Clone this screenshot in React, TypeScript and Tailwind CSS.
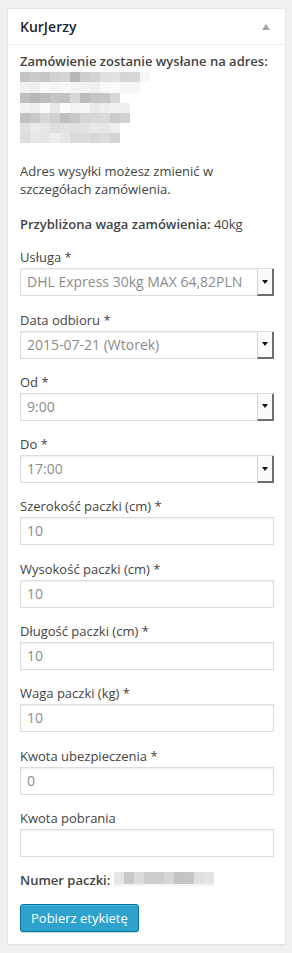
import React from 'react';

const font = { fontFamily: '"Open Sans", "Noto Sans", sans-serif' };

// pixelated (blurred) address, 10px cells
const addressRows: { h: string; cells: string[] }[] = [
  { h: 'h-[10px]', cells: ['#c4c4c4', '#cacaca', '#c6c6c6', '#d2d2d2', '#d4d4d4', '#b8b8b8', '#cfcfcf', '#d6d3d3', '#e0e0e0', '#e2e2e2', '#d6d6d6', '#d8d8d8', '#f6f6f6'] },
  { h: 'h-[11px]', cells: ['#f0f0f0', '#eeeeee', '#fafafa', '#f5f5f5', '#f8f8f8', '#f4f4f4', '#f2f2f2', '#f0f0f0', '#f8f8f8', '#fafafa', '#f6f6f6', '#f6f6f6'] },
  { h: 'h-[10px]', cells: ['#bfbfbf', '#b7b7b7', '#bdbdbd', '#c4c4c4', '#c2c2c2', '#d7d7d7', '#bcbcbc', '#c4c4c4', '#c6c6c6', '#d8d8d8'] },
  { h: 'h-[10px]', cells: ['#f2f2f2', '#efefef', '#fbfbfb', '#e8e8e8', '#fcfcfc', '#f2f2f2', '#f6f6f6', '#e9e9e9', '#eeeeee', '#f1f1f1', '#efefef'] },
  { h: 'h-[10px]', cells: ['#c2c2c2', '#c8c8c8', '#d8d8d8', '#d0d0d0', '#bfbfbf', '#c6c6c6', '#d6d6d6', '#d8d8d8', '#dadada', '#cbcbcb', '#d2d2d2'] },
  { h: 'h-[10px]', cells: ['#e0e0e0', '#ebebeb', '#e6e6e6', '#dedede', '#e2e2e2', '#e1e1e1', '#e3e3e3', '#e8e8e8', '#e6e6e6', '#eeeeee'] },
  { h: 'h-[10px]', cells: ['#dddddd', '#e8e8e8', '#e6e6e6', '#eeeeee', '#e6e6e6', '#dadada', '#dcdcdc', '#d8d8d8', '#dcdcdc', '#d4d4d4'] },
];

const parcelCells = ['#e6e6e6', '#cacaca', '#dcdcdc', '#cdcdcd', '#cdcdcd', '#d6d6d6', '#c4c4c4', '#c6c6c6', '#e0e0e0', '#e4e4e4'];

function Mosaic({ rows }: { rows: { h: string; cells: string[] }[] }) {
  return (
    <div className="flex flex-col">
      {rows.map((r, i) => (
        <div key={i} className={`flex ${r.h}`}>
          {r.cells.map((c, j) => (
            <div key={j} className="w-[10px] h-full" style={{ backgroundColor: c }} />
          ))}
        </div>
      ))}
    </div>
  );
}

function Label({ text }: { text: string }) {
  return <div className="h-5 leading-5 mb-px text-[13px] text-[#444]">{text}</div>;
}

function SelectField({ label, value }: { label: string; value: string }) {
  return (
    <div className="mt-[13.3px]">
      <Label text={label} />
      <div className="h-[28px] flex border border-[#ddd] bg-white shadow-[inset_0_1px_2px_rgba(0,0,0,0.07)]">
        <span className="flex-1 pl-[6px] leading-[26px] text-[14px] text-[#8c8c8c] whitespace-nowrap overflow-hidden">
          {value}
        </span>
        <span className="w-[17px] -mr-px -mb-px flex items-center justify-center bg-[#fbfbfb] border-l border-[#d4d4d4] border-r-2 border-b-2 border-r-[#6e6e6e] border-b-[#6e6e6e]">
          <svg width="6" height="4" viewBox="0 0 6 4">
            <path d="M0 0h6L3 4z" fill="#111" />
          </svg>
        </span>
      </div>
    </div>
  );
}

function InputField({ label, value }: { label: string; value: string }) {
  return (
    <div className="mt-[13.3px]">
      <Label text={label} />
      <div className="h-[28px] border border-[#ddd] bg-white shadow-[inset_0_1px_2px_rgba(0,0,0,0.07)] pl-[6px] leading-[26px] text-[14px] text-[#8c8c8c]">
        {value}
      </div>
    </div>
  );
}

export default function App() {
  return (
    <div className="min-h-screen bg-[#f1f1f1] pt-2 pb-2" style={font}>
      <div className="ml-[7px] w-[279px] bg-white border border-[#e5e5e5] shadow-[0_1px_1px_rgba(0,0,0,0.04)]">
        <div className="h-[36px] border-b border-[#eee] flex items-center justify-between pl-3 pr-[15px]">
          <span className="text-[14px] font-semibold text-[#23282d]">KurJerzy</span>
          <svg width="8" height="6" viewBox="0 0 8 6">
            <path d="M4 0l4 6H0z" fill="#a0a5aa" />
          </svg>
        </div>

        <div className="pl-3 pr-[11px] pt-[6px] pb-3 text-[13px] text-[#444]">
          <div className="h-5 leading-5 font-semibold">Zamówienie zostanie wysłane na adres:</div>
          <div className="mt-px">
            <Mosaic rows={addressRows} />
          </div>

          <p className="mt-[19px] leading-[18px]">
            Adres wysyłki możesz zmienić w
            <br />
            szczegółach zamówienia.
          </p>

          <div className="mt-4 h-5 leading-5">
            <span className="font-semibold">Przybliżona waga zamówienia:</span> 40kg
          </div>

          <SelectField label="Usługa *" value="DHL Express 30kg MAX 64,82PLN" />
          <SelectField label="Data odbioru *" value="2015-07-21 (Wtorek)" />
          <SelectField label="Od *" value="9:00" />
          <SelectField label="Do *" value="17:00" />

          <InputField label="Szerokość paczki (cm) *" value="10" />
          <InputField label="Wysokość paczki (cm) *" value="10" />
          <InputField label="Długość paczki (cm) *" value="10" />
          <InputField label="Waga paczki (kg) *" value="10" />
          <InputField label="Kwota ubezpieczenia *" value="0" />
          <InputField label="Kwota pobrania" value="" />

          <div className="mt-[14px] h-5 flex items-center">
            <span className="font-semibold">Numer paczki:</span>
            <div className="ml-1 -mt-[3px] flex flex-col">
              <div className="flex h-[12px]">
                {parcelCells.map((c, i) => (
                  <div key={i} className="w-[10px] h-full" style={{ backgroundColor: c }} />
                ))}
              </div>
              <div className="h-[2px] w-[100px] bg-[#f3f3f3]" />
            </div>
          </div>

          <button
            type="button"
            className="mt-[13px] h-[28px] px-[10px] rounded-[3px] bg-[#2ea2cc] border border-[#0074a2] text-white text-[13px] leading-[26px] shadow-[inset_0_1px_0_rgba(120,200,230,0.5),0_1px_0_rgba(0,0,0,0.15)]"
          >
            Pobierz etykietę
          </button>
        </div>
      </div>
    </div>
  );
}
